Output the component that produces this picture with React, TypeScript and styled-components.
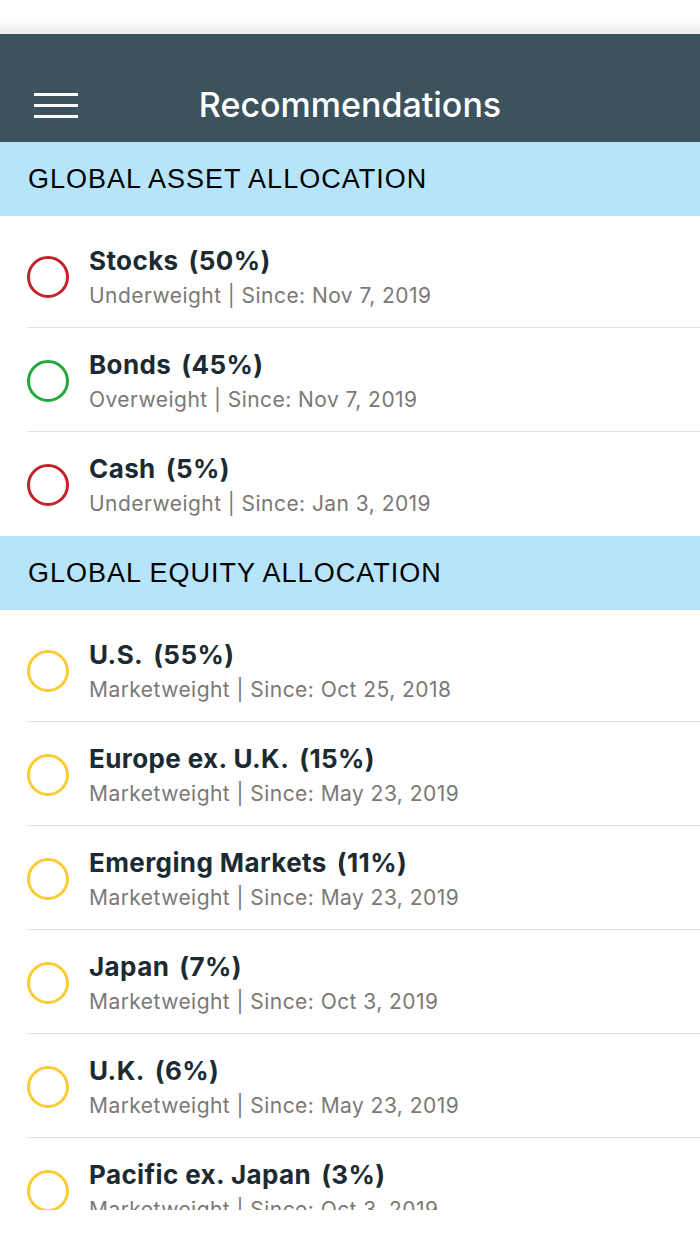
import React from "react";
import styled, { createGlobalStyle } from "styled-components";

const Global = createGlobalStyle`
  html, body { margin: 0; padding: 0; background: #ffffff; }
  * { box-sizing: border-box; }
`;

const Screen = styled.div`
  width: 700px;
  height: 1244px;
  display: flex;
  flex-direction: column;
  background: #ffffff;
  overflow: hidden;
`;

const StatusBar = styled.div`
  height: 34px;
  flex: none;
  display: flex;
  align-items: flex-end;
  justify-content: space-between;
  padding: 0 14px 6px;
  color: #ffffff;
  font-family: Inter, sans-serif;
  font-size: 20px;
  background: linear-gradient(#ffffff 0%, #ffffff 55%, #ececec 100%);
`;

const Header = styled.header`
  height: 108px;
  flex: none;
  background: #3c525d;
  display: grid;
  grid-template-columns: 110px 1fr 110px;
  align-items: end;
  padding-bottom: 18px;
`;

const MenuButton = styled.div`
  display: flex;
  flex-direction: column;
  gap: 8px;
  width: 44px;
  margin-left: 34px;
  margin-bottom: 6px;
`;

const MenuLine = styled.span`
  display: block;
  height: 3px;
  background: #ffffff;
`;

const Title = styled.h1`
  margin: 0;
  text-align: center;
  color: #ffffff;
  font-family: Inter, sans-serif;
  font-weight: 500;
  font-size: 34px;
  line-height: 38px;
`;

const List = styled.div`
  height: 1068px;
  flex: none;
  overflow: hidden;
  display: flex;
  flex-direction: column;
`;

const SectionHeader = styled.div`
  height: 74px;
  flex: none;
  background: #b6e4fa;
  display: flex;
  align-items: center;
  padding-left: 28px;
  font-family: "Liberation Sans", Arial, sans-serif;
  font-size: 27px;
  color: #000000;
  letter-spacing: 1px;
`;

const Rows = styled.div`
  padding-top: 8px;
  display: flex;
  flex-direction: column;
`;

const Row = styled.div<{ $last?: boolean }>`
  height: 104px;
  flex: none;
  display: flex;
  align-items: center;
  margin-left: 27px;
  border-bottom: ${(p) => (p.$last ? "none" : "1px solid #e2e2e2")};
  gap: 20px;
`;

const Dot = styled.span<{ $color: string }>`
  width: 42px;
  height: 42px;
  flex: none;
  border-radius: 50%;
  border: 3px solid ${(p) => p.$color};
  margin-top: 2px;
`;

const Texts = styled.div`
  display: flex;
  flex-direction: column;
  gap: 8px;
  margin-top: 2px;
`;

const Name = styled.div`
  display: flex;
  gap: 10px;
  font-family: Inter, sans-serif;
  font-weight: 700;
  font-size: 26px;
  line-height: 30px;
  letter-spacing: 0.4px;
  color: #1c2a32;
`;

const Sub = styled.div`
  font-family: Inter, sans-serif;
  font-size: 21px;
  line-height: 24px;
  color: #7b7876;
  letter-spacing: 0.45px;
`;

const COLORS: Record<string, string> = {
  Underweight: "#c62328",
  Overweight: "#1faa39",
  Marketweight: "#fbcb32",
};

type Item = { name: string; pct: string; weight: string; since: string };

const sections: { title: string; items: Item[] }[] = [
  {
    title: "GLOBAL ASSET ALLOCATION",
    items: [
      { name: "Stocks", pct: "(50%)", weight: "Underweight", since: "Nov 7, 2019" },
      { name: "Bonds", pct: "(45%)", weight: "Overweight", since: "Nov 7, 2019" },
      { name: "Cash", pct: "(5%)", weight: "Underweight", since: "Jan 3, 2019" },
    ],
  },
  {
    title: "GLOBAL EQUITY ALLOCATION",
    items: [
      { name: "U.S.", pct: "(55%)", weight: "Marketweight", since: "Oct 25, 2018" },
      { name: "Europe ex. U.K.", pct: "(15%)", weight: "Marketweight", since: "May 23, 2019" },
      { name: "Emerging Markets", pct: "(11%)", weight: "Marketweight", since: "May 23, 2019" },
      { name: "Japan", pct: "(7%)", weight: "Marketweight", since: "Oct 3, 2019" },
      { name: "U.K.", pct: "(6%)", weight: "Marketweight", since: "May 23, 2019" },
      { name: "Pacific ex. Japan", pct: "(3%)", weight: "Marketweight", since: "Oct 3, 2019" },
    ],
  },
];

export default function App() {
  return (
    <>
      <Global />
      <Screen>
        <StatusBar>
          <span>Carrier</span>
          <span>3:47 PM</span>
          <span>100%</span>
        </StatusBar>
        <Header>
          <MenuButton>
            <MenuLine />
            <MenuLine />
            <MenuLine />
          </MenuButton>
          <Title>Recommendations</Title>
          <span />
        </Header>
        <List>
          {sections.map((s) => (
            <React.Fragment key={s.title}>
              <SectionHeader>{s.title}</SectionHeader>
              <Rows>
                {s.items.map((it, i) => (
                  <Row key={it.name} $last={i === s.items.length - 1}>
                    <Dot $color={COLORS[it.weight]} />
                    <Texts>
                      <Name>
                        <span>{it.name}</span>
                        <span>{it.pct}</span>
                      </Name>
                      <Sub>
                        {it.weight} | Since: {it.since}
                      </Sub>
                    </Texts>
                  </Row>
                ))}
              </Rows>
            </React.Fragment>
          ))}
        </List>
      </Screen>
    </>
  );
}
